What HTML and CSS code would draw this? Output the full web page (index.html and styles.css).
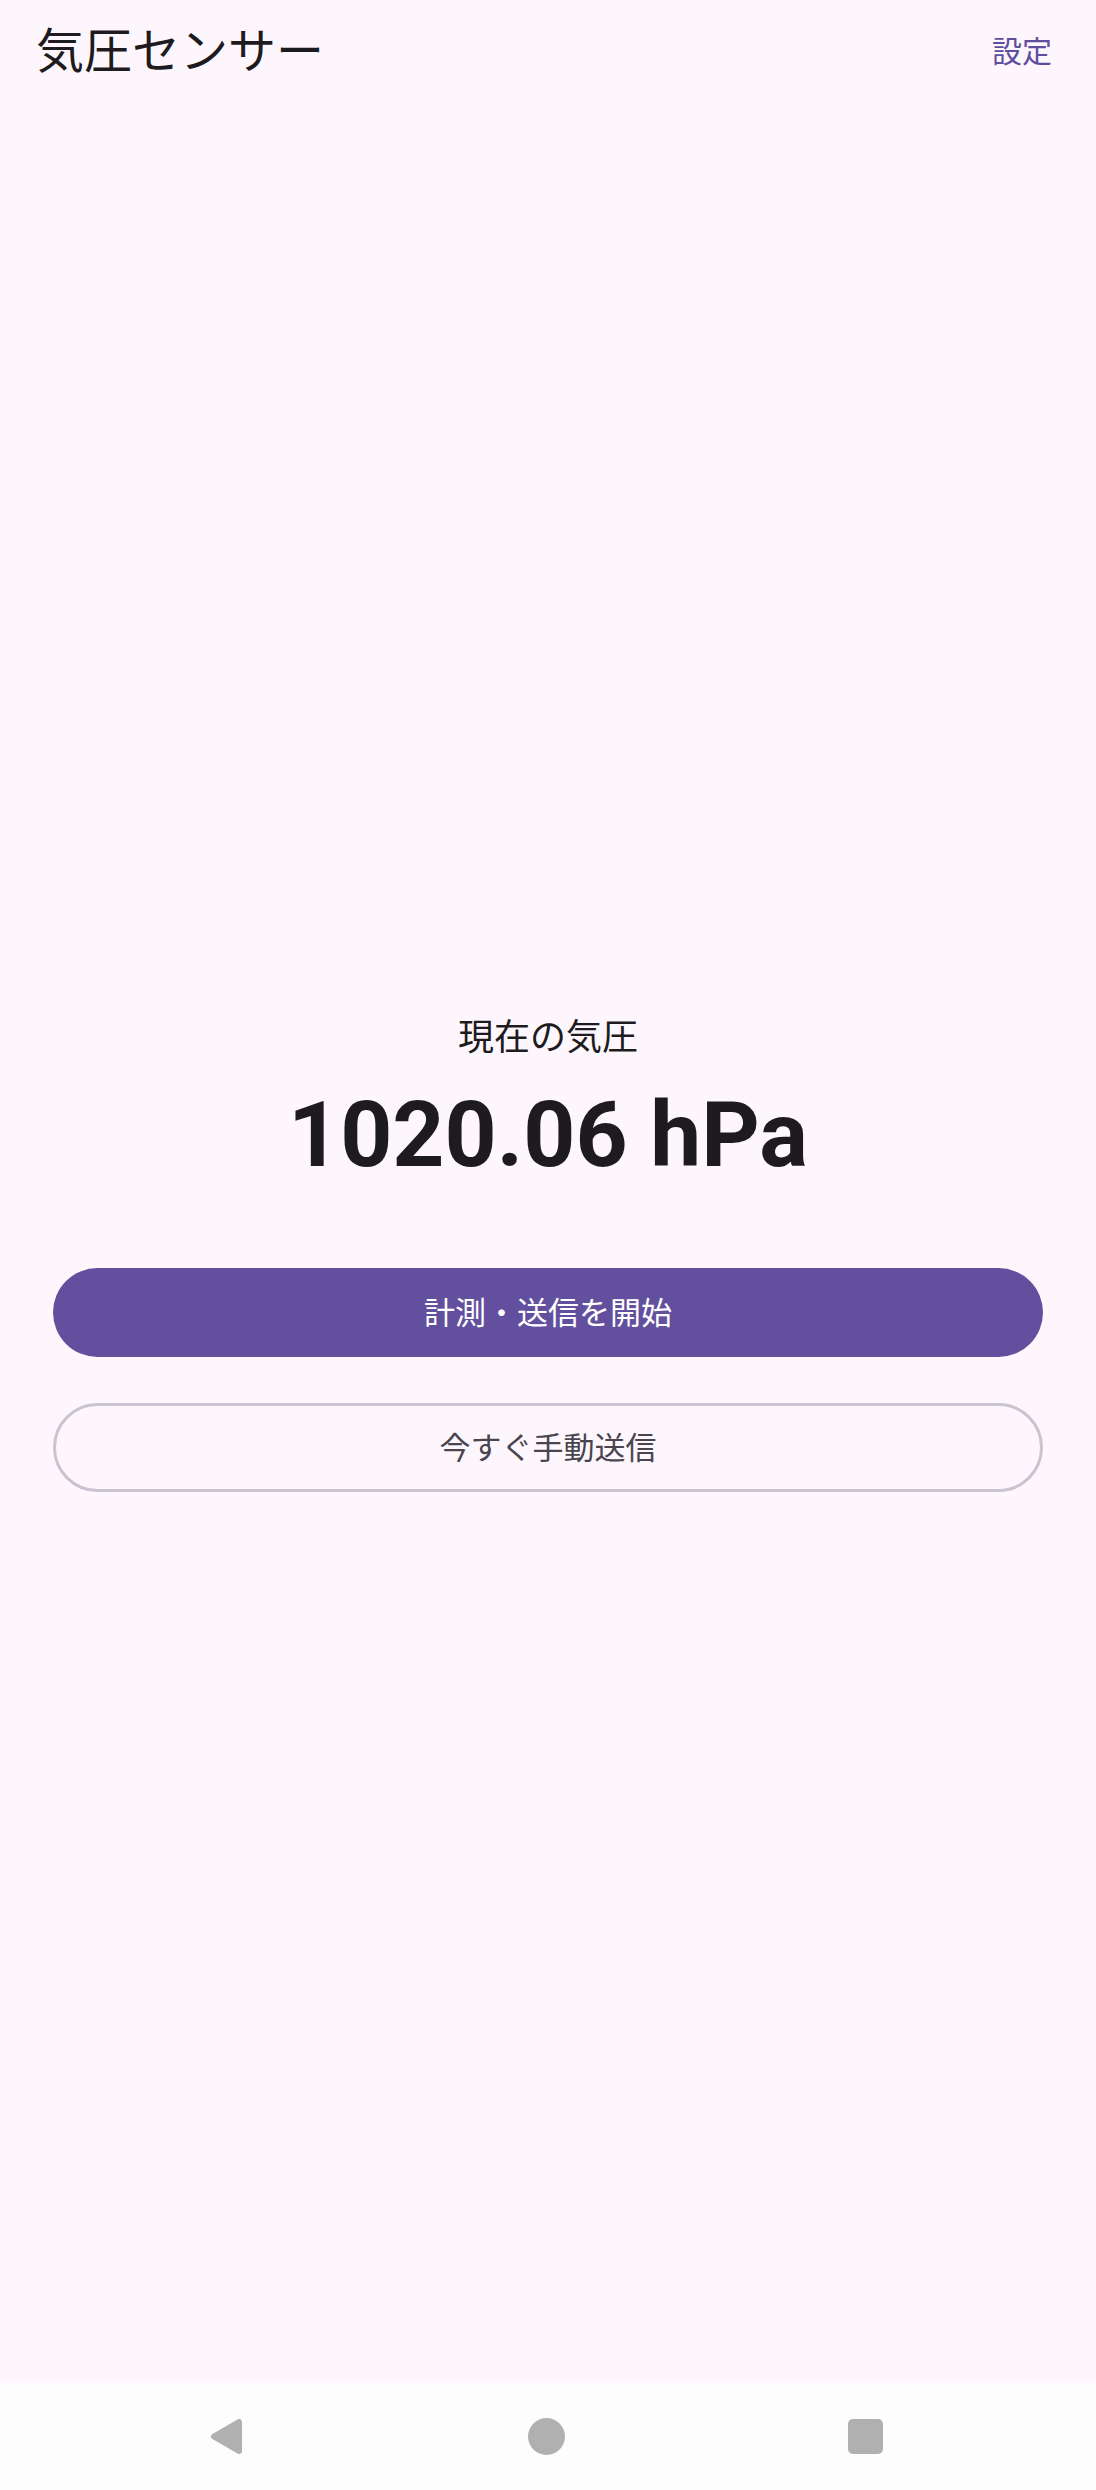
FILE: index.html
```html
<!DOCTYPE html>
<html lang="ja">
<head>
<meta charset="utf-8">
<title>気圧センサー</title>
<link rel="stylesheet" href="styles.css">
</head>
<body>
<div class="screen">
  <header class="topbar">
    <h1 class="title">気圧センサー</h1>
    <a href="#" class="settings">設定</a>
  </header>

  <main class="content">
    <p class="label">現在の気圧</p>
    <p class="value">1020.06 hPa</p>
    <a href="#" class="btn btn-filled">計測・送信を開始</a>
    <a href="#" class="btn btn-outlined">今すぐ手動送信</a>
  </main>

  <nav class="navbar">
    <svg class="nav-icon" width="37" height="37" viewBox="0 0 37 37">
      <path d="M6 18.5 L31 4 L31 33 Z" fill="#b0b0b0" stroke="#b0b0b0" stroke-width="6" stroke-linejoin="round"/>
    </svg>
    <span class="nav-home"></span>
    <span class="nav-recent"></span>
  </nav>
</div>
</body>
</html>
```

FILE: styles.css
```css
html, body {
  margin: 0;
  padding: 0;
}
body {
  background: #fdf7fd;
  font-family: Roboto, "Noto Sans CJK JP", sans-serif;
  color: #1d1b20;
}
.screen {
  width: 1096px;
  height: 2490px;
  display: flex;
  flex-direction: column;
}

.topbar {
  height: 104px;
  display: flex;
  align-items: center;
  justify-content: space-between;
  padding: 0 44px 0 36px;
}
.title {
  margin: 0;
  font-size: 48px;
  font-weight: 400;
  line-height: 1;
}
.settings {
  font-size: 30px;
  color: #5f4d9e;
  text-decoration: none;
  line-height: 1;
}

.content {
  flex: 1;
  display: flex;
  flex-direction: column;
  align-items: center;
  justify-content: center;
  padding: 22px 53px 0;
}
.label {
  margin: 0;
  font-size: 36px;
  line-height: 1.2;
}
.value {
  margin: 30px 0 87px;
  font-size: 91px;
  font-weight: 700;
  line-height: 1;
}
.btn {
  box-sizing: border-box;
  width: 100%;
  height: 89px;
  padding-bottom: 4px;
  border-radius: 45px;
  display: flex;
  align-items: center;
  justify-content: center;
  font-size: 31px;
  text-decoration: none;
}
.btn-filled {
  background: #62509e;
  color: #fff;
}
.btn-outlined {
  margin-top: 46px;
  border: 3px solid #cac4d0;
  color: #49454f;
}

.navbar {
  height: 107px;
  background: #fefdfe;
  display: flex;
  align-items: center;
  justify-content: center;
  gap: 283px;
  padding-right: 6px;
}
.nav-icon {
  display: block;
}
.nav-home {
  width: 37px;
  height: 37px;
  border-radius: 50%;
  background: #b0b0b0;
}
.nav-recent {
  width: 35px;
  height: 35px;
  border-radius: 5px;
  background: #b0b0b0;
}
```
